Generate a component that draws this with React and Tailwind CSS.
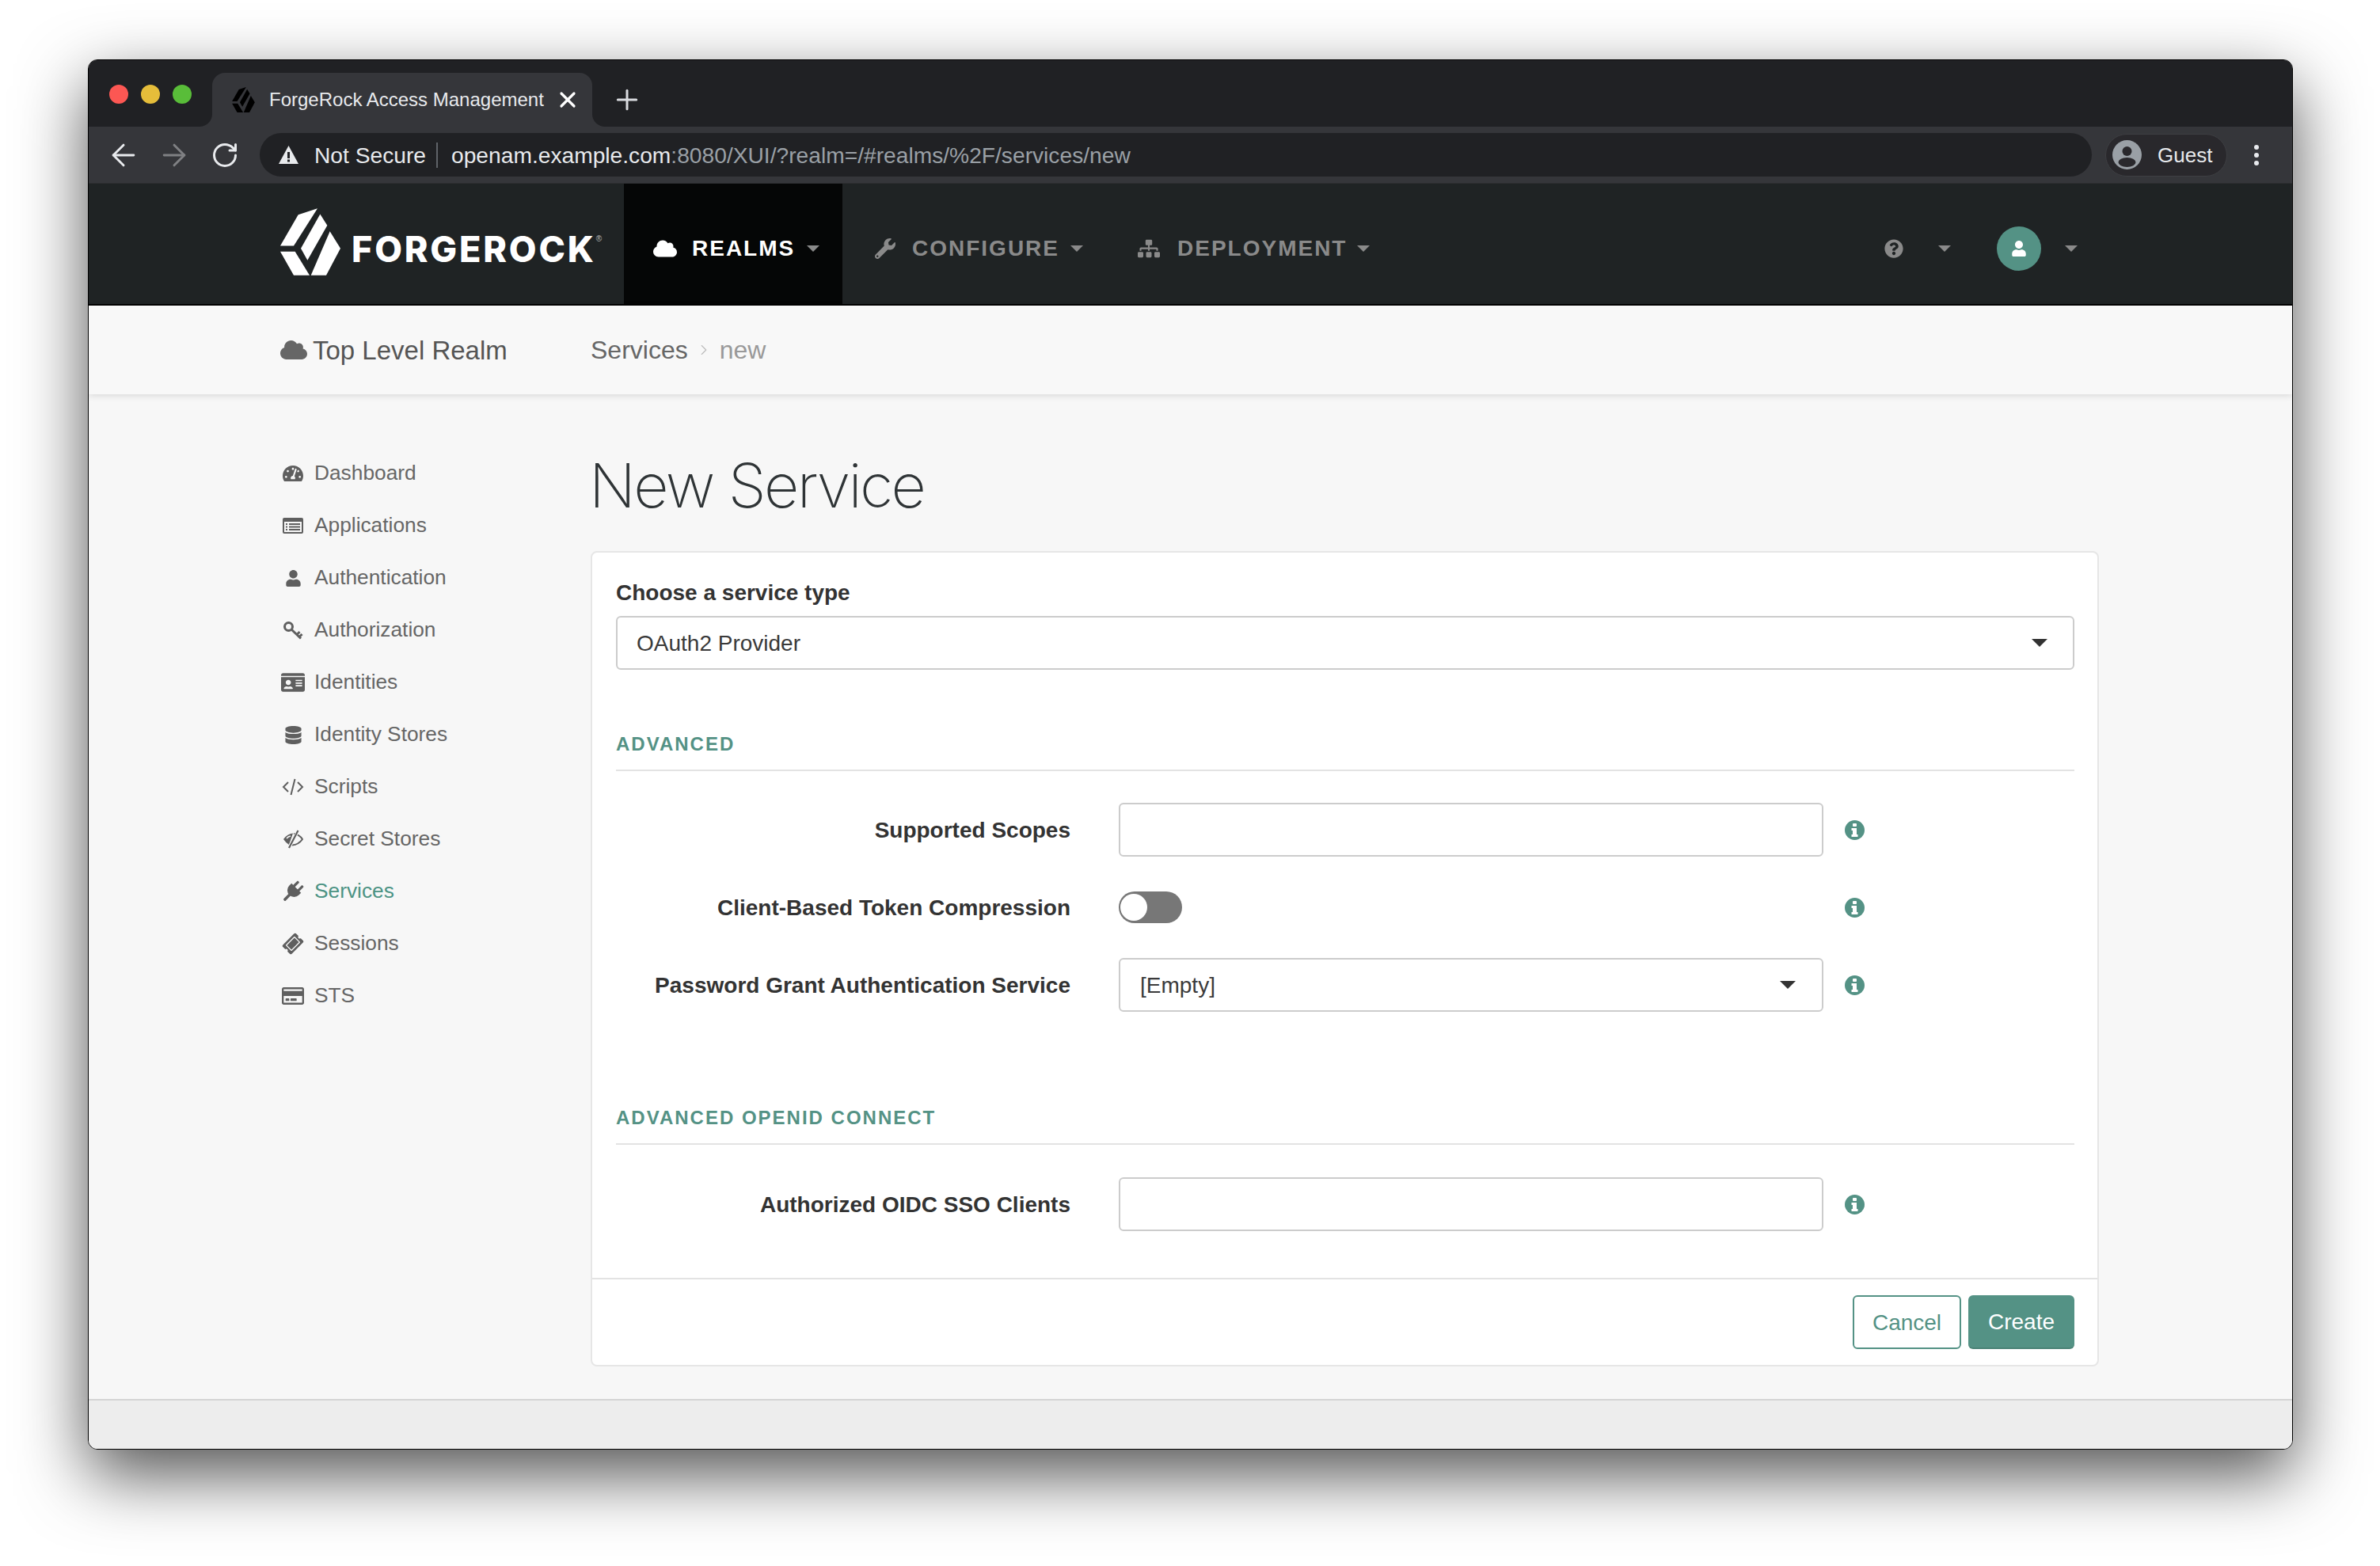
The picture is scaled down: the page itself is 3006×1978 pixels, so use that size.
import React from "react";
import { ArrowLeft, ArrowRight, RotateCw, X, Plus, ChevronRight } from "lucide-react";
import { FaCloud, FaWrench, FaSitemap, FaQuestionCircle, FaUser, FaTachometerAlt, FaIdCard, FaDatabase, FaTicketAlt, FaRegCreditCard } from "react-icons/fa";

const Logo = ({ className }) => (
  <svg viewBox="44 38 228 254" className={className} fill="currentColor">
    <polygon points="112,62 185,38 95,180 44,180" />
    <polygon points="195,60 222,103 147,235 122,190" />
    <polygon points="232,125 272,190 218,292 160,292" />
    <polygon points="44,202 100,202 155,292 95,292" />
  </svg>
);

const Caret = ({ className }) => (
  <svg viewBox="0 0 16 8" className={className} fill="currentColor">
    <polygon points="0,0 16,0 8,8" />
  </svg>
);

const KeyIcon = () => (
  <svg viewBox="0 0 26 24" className="w-[26px] h-[24px]" fill="none" stroke="currentColor" strokeWidth="3">
    <circle cx="7.5" cy="7.5" r="5" />
    <path d="M11 11 L23 22.5 M18 17.5 L21.5 14 M21 20.5 L24.5 17" />
  </svg>
);

const CodeIcon = () => (
  <svg viewBox="0 0 28 24" className="w-[28px] h-[24px]" fill="none" stroke="currentColor" strokeWidth="2">
    <path d="M8 6 L2 12 L8 18 M20 6 L26 12 L20 18 M16.5 2 L11.5 22" />
  </svg>
);

const ListIcon = () => (
  <svg viewBox="0 0 26 20" className="w-[26px] h-[20px]" fill="currentColor">
    <path fillRule="evenodd" d="M2 0 H24 a2 2 0 0 1 2 2 V18 a2 2 0 0 1 -2 2 H2 a2 2 0 0 1 -2 -2 V2 a2 2 0 0 1 2 -2 Z M2 5 V18 H24 V5 Z" />
    <path d="M4 7 h2 v2 h-2 Z M8 7 h14 v2 h-14 Z M4 10.5 h2 v2 h-2 Z M8 10.5 h14 v2 h-14 Z M4 14 h2 v2 h-2 Z M8 14 h14 v2 h-14 Z" />
  </svg>
);

const EyeIcon = () => (
  <svg viewBox="0 0 26 24" className="w-[26px] h-[24px]">
    <path d="M1 12 Q6 5 13 4.5 L8 19 Q4 16.5 1 12 Z" fill="currentColor" />
    <path d="M14 5 Q21 6 25 12 Q20 19 12 19.5" fill="none" stroke="currentColor" strokeWidth="2" />
    <path d="M19.5 1 L8 23" stroke="#f7f7f7" strokeWidth="4" />
    <path d="M19.5 1 L8 23" stroke="currentColor" strokeWidth="2.2" />
    <path d="M5 11 Q7 8.5 10 8" fill="none" stroke="#f7f7f7" strokeWidth="1.5" />
  </svg>
);

const PlugIcon = () => (
  <svg viewBox="-1 -1 28 28" className="w-[28px] h-[28px]" fill="currentColor">
    <g transform="rotate(45 13 13)">
      <rect x="7.5" y="-1" width="3.2" height="9" rx="1" />
      <rect x="15.3" y="-1" width="3.2" height="9" rx="1" />
      <path d="M4.5 7 H21.5 V11 a8.5 8.5 0 0 1 -17 0 Z" />
      <rect x="11.2" y="18" width="3.6" height="11" rx="1.5" />
    </g>
  </svg>
);

const InfoIcon = () => (
  <svg viewBox="0 0 25 25" className="w-[25px] h-[25px] ml-[27px] shrink-0">
    <circle cx="12.5" cy="12.5" r="12.5" fill="#549285" />
    <rect x="10" y="4" width="5" height="4" rx="1" fill="#ffffff" />
    <path d="M8.5 10 H15 V18 H16.5 V21 H8.5 V18 H10 V13 H8.5 Z" fill="#ffffff" />
  </svg>
);

const Row = ({ icon, label, active }) => (
  <div className="h-[66px] flex items-center gap-[11px]">
    <div className="w-[32px] flex justify-center text-[#5f5f5f]">{icon}</div>
    <span className={active ? "text-[#4c9384]" : "text-[#666666]"}>{label}</span>
  </div>
);

const FieldRow = ({ label, children }) => (
  <div className="flex items-center h-[68px]">
    <label className="w-[574px] pt-[2px] text-right font-bold text-[#333333]">{label}</label>
    <div className="ml-[61px] w-[890px] shrink-0">{children}</div>
    <InfoIcon />
  </div>
);

const SectionHead = ({ children, className }) => (
  <div className={"text-[24px] leading-[32px] font-bold tracking-[2px] text-[#549285] pt-[1px] pb-[16px] border-b-2 border-[#e3e3e3] " + className}>{children}</div>
);

export default function App() {
  const sidebar = [
    [<FaTachometerAlt className="text-[26px]" />, "Dashboard"],
    [<ListIcon />, "Applications"],
    [<FaUser className="text-[21px]" />, "Authentication"],
    [<KeyIcon />, "Authorization"],
    [<FaIdCard className="text-[30px]" />, "Identities"],
    [<FaDatabase className="text-[23px]" />, "Identity Stores"],
    [<CodeIcon />, "Scripts"],
    [<EyeIcon />, "Secret Stores"],
    [<PlugIcon />, "Services", true],
    [<FaTicketAlt className="text-[24px] -rotate-45" />, "Sessions"],
    [<FaRegCreditCard className="text-[28px]" />, "STS"],
  ];
  return (
    <div className="h-[1978px] bg-white pt-[75px] pl-[111px] overflow-hidden font-['Liberation_Sans',sans-serif]">
      <div className="w-[2785px] h-[1756px] flex flex-col rounded-[12px] border border-black overflow-hidden shadow-[0_32px_86px_rgba(0,0,0,0.68)] bg-[#f7f7f7] relative">
        {/* tab strip */}
        <div className="h-[84px] flex bg-[#35363a] shrink-0">
          <div className="w-[156px] bg-[#202124] rounded-br-[16px] flex items-start pt-[31px] pl-[26px] gap-[16px] shrink-0">
            <span className="w-[24px] h-[24px] rounded-full bg-[#fc5753]" />
            <span className="w-[24px] h-[24px] rounded-full bg-[#e5bd3a]" />
            <span className="w-[24px] h-[24px] rounded-full bg-[#59bd39]" />
          </div>
          <div className="bg-[#202124] pt-[16px] shrink-0">
            <div className="w-[480px] h-[68px] bg-[#35363a] rounded-t-[16px] flex items-center pl-[25px] text-white">
              <Logo className="w-[29px] h-[32px] text-black" />
              <span className="ml-[18px] text-[24px] whitespace-nowrap text-[#e8eaed]">ForgeRock Access Management</span>
              <X className="ml-[14px] w-[32px] h-[32px] text-white shrink-0" strokeWidth={2.4} />
            </div>
          </div>
          <div className="flex-1 bg-[#202124] rounded-bl-[16px] flex items-center pl-[24px] pt-[16px]">
            <Plus className="w-[40px] h-[40px] text-[#dadce0]" strokeWidth={1.8} />
          </div>
        </div>
        {/* toolbar */}
        <div className="h-[72px] bg-[#35363a] flex items-center shrink-0 border-b border-[#2d2e31]">
          <ArrowLeft className="ml-[22px] w-[44px] h-[44px] text-[#e8eaed] shrink-0" strokeWidth={1.6} />
          <ArrowRight className="ml-[20px] w-[44px] h-[44px] text-[#7f8083] shrink-0" strokeWidth={1.6} />
          <RotateCw className="ml-[24px] w-[36px] h-[36px] text-[#e8eaed] shrink-0" strokeWidth={2} />
          <div className="ml-[26px] h-[55px] w-[2314px] rounded-full bg-[#202124] flex items-center pl-[24px] text-[28.2px] whitespace-nowrap shrink-0">
            <svg viewBox="0 0 25 23" className="w-[25px] h-[23px] shrink-0">
              <path d="M12.5 0 L25 23 L0 23 Z" fill="#e8eaed" />
              <rect x="11" y="8" width="3" height="8" fill="#202124" />
              <rect x="11" y="17.5" width="3" height="3" fill="#202124" />
            </svg>
            <span className="ml-[20px] pt-[1px] text-[#e8eaed]">Not Secure</span>
            <span className="ml-[13px] w-[2px] h-[32px] bg-[#5f6368]" />
            <span className="ml-[17px] pt-[1px] text-[#e8eaed]">openam.example.com<span className="text-[#9aa0a6]">:8080/XUI/?realm=/#realms/%2F/services/new</span></span>
          </div>
          <div className="ml-[17px] w-[154px] h-[54px] rounded-full bg-[#29282c] border border-[#3e3f43] flex items-center pl-[8px] text-[26px] text-[#e8eaed] shrink-0">
            <svg viewBox="0 0 37 37" className="w-[37px] h-[37px] shrink-0">
              <circle cx="18.5" cy="18.5" r="18.5" fill="#9aa0a6" />
              <circle cx="18.5" cy="14" r="6" fill="#29282c" />
              <ellipse cx="18.5" cy="28" rx="11" ry="6" fill="#29282c" />
            </svg>
            <span className="ml-[20px] pt-[1px]">Guest</span>
          </div>
          <div className="ml-[34px] flex flex-col gap-[4px]">
            <span className="w-[6px] h-[6px] rounded-full bg-[#e8eaed]" />
            <span className="w-[6px] h-[6px] rounded-full bg-[#e8eaed]" />
            <span className="w-[6px] h-[6px] rounded-full bg-[#e8eaed]" />
          </div>
        </div>
        {/* nav */}
        <div className="h-[154px] bg-[#1f2324] border-b-2 border-black flex shrink-0 text-[28px] font-bold tracking-[2px] text-[#8a8a8a]">
          <div className="w-[434px] ml-[242px] flex items-center text-white shrink-0">
            <Logo className="w-[76px] h-[85px] shrink-0 mb-[6px]" />
            <span className="ml-[14px] mt-[12px] text-[45px] leading-none font-['Inter'] font-extrabold tracking-[2.8px]">FORGEROCK</span>
            <span className="text-[10px] font-normal tracking-normal self-start mt-[62px] text-[#bbbbbb]">®</span>
          </div>
          <div className="w-[276px] bg-[#050606] flex items-center pl-[37px] pt-[12px] text-white shrink-0">
            <FaCloud className="text-[30px] shrink-0" />
            <span className="ml-[19px]">REALMS</span>
            <Caret className="ml-[15px] w-[16px] h-[8px] text-[#8a8a8a]" />
          </div>
          <div className="flex items-center pl-[41px] pt-[12px] shrink-0">
            <FaWrench className="text-[26px] shrink-0" />
            <span className="ml-[21px]">CONFIGURE</span>
            <Caret className="ml-[14px] w-[16px] h-[8px]" />
          </div>
          <div className="flex items-center pl-[69px] pt-[12px] shrink-0">
            <FaSitemap className="text-[28px] shrink-0" />
            <span className="ml-[22px]">DEPLOYMENT</span>
            <Caret className="ml-[13px] w-[16px] h-[8px]" />
          </div>
          <div className="ml-auto flex items-center pr-[271px] pt-[12px] shrink-0">
            <FaQuestionCircle className="text-[24px]" />
            <Caret className="ml-[44px] w-[16px] h-[8px]" />
            <div className="ml-[58px] w-[56px] h-[56px] rounded-full bg-[#549285] flex items-center justify-center text-white">
              <FaUser className="text-[20px]" />
            </div>
            <Caret className="ml-[30px] w-[16px] h-[8px]" />
          </div>
        </div>
        {/* sub bar */}
        <div className="h-[112px] bg-[#f8f8f8] flex items-center pl-[242px] shrink-0 relative shadow-[0_2px_8px_rgba(0,0,0,0.12)]">
          <div className="w-[392px] flex items-center text-[33px] text-[#555555] shrink-0">
            <FaCloud className="text-[34px] text-[#666666]" />
            <span className="ml-[7px] pt-[2px]">Top Level Realm</span>
          </div>
          <span className="text-[32px] text-[#666666]">Services</span>
          <ChevronRight className="mx-[9px] w-[22px] h-[22px] text-[#bbbbbb]" strokeWidth={1.2} />
          <span className="text-[32px] text-[#999999]">new</span>
        </div>
        {/* main */}
        <div className="flex-1 flex pl-[242px] text-[26.3px]">
          <div className="w-[392px] pt-[67px] shrink-0">
            {sidebar.map(([icon, label, active]) => (
              <Row key={label} icon={icon} label={label} active={active} />
            ))}
          </div>
          <div className="w-[1905px] pt-[70px] text-[28px] shrink-0">
            <h1 className="h-[90px] leading-[90px] mb-[38px] -ml-[2px] text-[77px] font-['Inter'] font-extralight tracking-[-2.6px] text-[#2f3436] whitespace-nowrap">New Service</h1>
            <div className="h-[1030px] bg-white border-2 border-[#e6e6e6] rounded-[8px] flex flex-col">
              <div className="flex-1 pl-[30px] pr-[29px] pt-[30px]">
                <div className="h-[40px] leading-[40px] pt-[1px] font-bold text-[#333333]">Choose a service type</div>
                <div className="mt-[10px] h-[68px] border-2 border-[#cccccc] rounded-[6px] flex items-center justify-between pl-[24px] pr-[32px] text-[#3a3a3a]">
                  <span className="pt-[1px]">OAuth2 Provider</span>
                  <Caret className="w-[20px] h-[10px] text-[#333333]" />
                </div>
                <SectionHead className="mt-[77px] mb-[40px]">ADVANCED</SectionHead>
                <div className="flex flex-col gap-[30px]">
                  <FieldRow label="Supported Scopes">
                    <div className="h-[68px] border-2 border-[#cccccc] rounded-[6px]" />
                  </FieldRow>
                  <FieldRow label="Client-Based Token Compression">
                    <div className="w-[80px] h-[40px] rounded-full bg-[#777777] flex items-center pl-[2px]">
                      <span className="w-[34px] h-[34px] rounded-full bg-white" />
                    </div>
                  </FieldRow>
                  <FieldRow label="Password Grant Authentication Service">
                    <div className="h-[68px] border-2 border-[#cccccc] rounded-[6px] flex items-center justify-between pl-[25px] pr-[33px] text-[#3a3a3a]">
                      <span className="pt-[1px]">[Empty]</span>
                      <Caret className="w-[20px] h-[10px] text-[#333333]" />
                    </div>
                  </FieldRow>
                </div>
                <SectionHead className="mt-[117px] mb-[41px]">ADVANCED OPENID CONNECT</SectionHead>
                <FieldRow label="Authorized OIDC SSO Clients">
                  <div className="h-[68px] border-2 border-[#cccccc] rounded-[6px]" />
                </FieldRow>
              </div>
              <div className="h-[110px] border-t-2 border-[#e3e3e3] flex items-center justify-end gap-[9px] pr-[29px] shrink-0">
                <button className="w-[137px] h-[68px] pt-[2px] border-2 border-[#549285] rounded-[6px] text-[#549285] bg-white">Cancel</button>
                <button className="w-[134px] h-[68px] pt-[2px] border-b-2 border-[#4a8376] rounded-[6px] text-white bg-[#549285]">Create</button>
              </div>
            </div>
          </div>
        </div>
        {/* footer */}
        <div className="h-[63px] bg-[#ededed] border-t-2 border-[#d5d5d5] shrink-0" />
      </div>
    </div>
  );
}
